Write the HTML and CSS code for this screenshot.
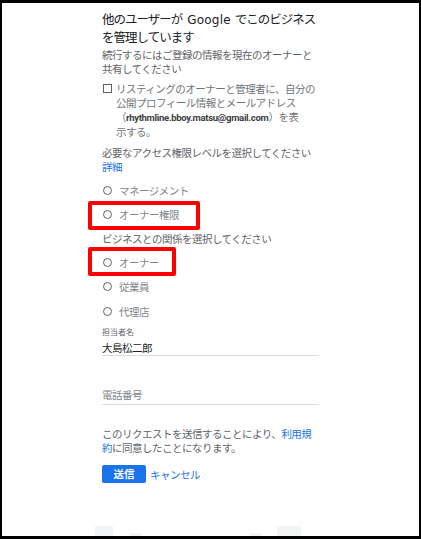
FILE: index.html
```html
<!DOCTYPE html>
<html lang="ja">
<head>
<meta charset="utf-8">
<title>ビジネスのオーナー権限をリクエスト</title>
<link rel="stylesheet" href="styles.css">
</head>
<body>
<div class="frame">
  <main class="form">
    <h1 class="title"><span class="title-line">他のユーザーが<span class="latin">Google</span>でこのビジネス</span><span class="title-line">を管理しています</span></h1>
    <p class="desc">続行するにはご登録の情報を現在のオーナーと<br>共有してください</p>
    <label class="check">
      <span class="box"></span>
      <span class="check-text">リスティングのオーナーと管理者に、自分の<br>公開プロフィール情報とメールアドレス<br>（<b class="email">rhythmline.bboy.matsu@gmail.com</b>）を表<br>示する。</span>
    </label>
    <p class="section">必要なアクセス権限レベルを選択してください<br><a class="link" href="#">詳細</a></p>
    <div class="radios">
      <div class="radio"><span class="circle"></span>マネージメント</div>
      <div class="radio"><span class="circle"></span>オーナー権限<span class="mark mark-wide"></span></div>
    </div>
    <p class="section section-tight">ビジネスとの関係を選択してください</p>
    <div class="radios">
      <div class="radio"><span class="circle"></span>オーナー<span class="mark mark-narrow"></span></div>
      <div class="radio"><span class="circle"></span>従業員</div>
      <div class="radio"><span class="circle"></span>代理店</div>
    </div>
    <div class="field-label">担当者名</div>
    <div class="field">大島松二郎</div>
    <div class="field field-empty">電話番号</div>
    <p class="terms">このリクエストを送信することにより、<a class="link" href="#">利用規<br>約</a>に同意したことになります。</p>
    <div class="actions">
      <button class="btn" type="button">送信</button>
      <a class="link cancel" href="#">キャンセル</a>
    </div>
  </main>
  <div class="ghosts">
    <span class="ghost ghost-a"></span>
    <span class="ghost ghost-b"></span>
    <span class="ghost ghost-c"></span>
    <span class="ghost ghost-d"></span>
  </div>
</div>
</body>
</html>
```

FILE: styles.css
```css
html, body {
  margin: 0;
  padding: 0;
}

body {
  width: 421px;
  height: 539px;
  background: #fff;
  font-family: "Noto Sans CJK JP", sans-serif;
}

.frame {
  box-sizing: border-box;
  width: 421px;
  height: 539px;
  border-style: solid;
  border-color: #000;
  border-width: 3px 2px 3px 2px;
  display: flex;
  flex-direction: column;
  overflow: hidden;
}

.form {
  width: 216px;
  margin-left: 100px;
  display: flex;
  flex-direction: column;
}

.title {
  margin: 7px 0 0;
  display: flex;
  flex-direction: column;
  font-size: 12.5px;
  font-weight: 400;
  line-height: 17.5px;
  letter-spacing: -1px;
  color: #202124;
  white-space: nowrap;
}

.title-line {
  display: block;
  height: 17.5px;
}

.latin {
  margin: 0 4px 0 5px;
  font-family: "DejaVu Sans", sans-serif;
  font-size: 12px;
  line-height: 1;
  letter-spacing: 0.2px;
}

.desc {
  margin: 3px 0 0;
  font-size: 10.5px;
  line-height: 14px;
  letter-spacing: -0.5px;
  color: #5f6368;
  white-space: nowrap;
}

.check {
  margin-top: 6px;
  display: flex;
  gap: 4px;
  align-items: flex-start;
  font-size: 10.5px;
  line-height: 14px;
  letter-spacing: -0.5px;
  color: #70757a;
  white-space: nowrap;
}

.box {
  flex: none;
  box-sizing: border-box;
  width: 9px;
  height: 9px;
  margin: 2px 0 0 1px;
  border: 1.5px solid #5f6368;
}

.email {
  font-family: Roboto, sans-serif;
  font-weight: 700;
  font-size: 9.5px;
  letter-spacing: -0.3px;
  color: #3c4043;
}

.section {
  margin: 7px 0 0;
  font-size: 10.5px;
  line-height: 14px;
  letter-spacing: -0.5px;
  color: #5f6368;
  white-space: nowrap;
}

.section-tight {
  margin-top: 5px;
}

.link {
  color: #1a73e8;
  text-decoration: none;
}

.radios {
  margin-top: 4px;
  display: flex;
  flex-direction: column;
}

.radio {
  position: relative;
  height: 24.5px;
  display: flex;
  align-items: center;
  gap: 7px;
  font-size: 10.5px;
  letter-spacing: -0.5px;
  color: #80868b;
}

.circle {
  flex: none;
  box-sizing: border-box;
  width: 9px;
  height: 9px;
  margin-left: 1px;
  border: 1.3px solid #5f6368;
  border-radius: 50%;
}

.mark {
  position: absolute;
  left: -14px;
  box-sizing: border-box;
  height: 29px;
  border: 4px solid #ff0000;
  border-radius: 2px;
}

.mark-wide {
  top: -2px;
  width: 112px;
}

.mark-narrow {
  top: -3.5px;
  width: 88px;
}

.field-label {
  margin-top: 3.5px;
  font-size: 8px;
  line-height: 10px;
  color: #5f6368;
}

.field {
  margin-top: 4px;
  font-size: 10.5px;
  line-height: 14px;
  letter-spacing: -0.5px;
  color: #202124;
  border-bottom: 1px solid #dadce0;
}

.field-empty {
  margin-top: 32px;
  padding-bottom: 2px;
  color: #80868b;
}

.terms {
  margin: 22px 0 0;
  font-size: 10.5px;
  line-height: 13.5px;
  letter-spacing: -0.5px;
  color: #5f6368;
  white-space: nowrap;
}

.actions {
  margin-top: 11px;
  display: flex;
  align-items: center;
  gap: 4px;
}

.btn {
  width: 44px;
  height: 18px;
  padding: 0;
  border: none;
  border-radius: 2px;
  background: #1a73e8;
  color: #fff;
  font-family: "Noto Sans CJK JP", sans-serif;
  font-weight: 700;
  font-size: 10.5px;
  line-height: 18px;
}

.cancel {
  font-size: 10.5px;
  letter-spacing: -0.5px;
}

.ghosts {
  margin-top: auto;
  height: 10px;
  display: flex;
  align-items: flex-end;
}

.ghost {
  display: block;
  background: #f1f3f4;
}

.ghost-a {
  margin-left: 93px;
  width: 18px;
  height: 10px;
}

.ghost-b {
  margin-left: 17px;
  width: 11px;
  height: 3px;
}

.ghost-c {
  margin-left: 109px;
  width: 11px;
  height: 3px;
}

.ghost-d {
  margin-left: 16px;
  width: 24px;
  height: 10px;
}
```
